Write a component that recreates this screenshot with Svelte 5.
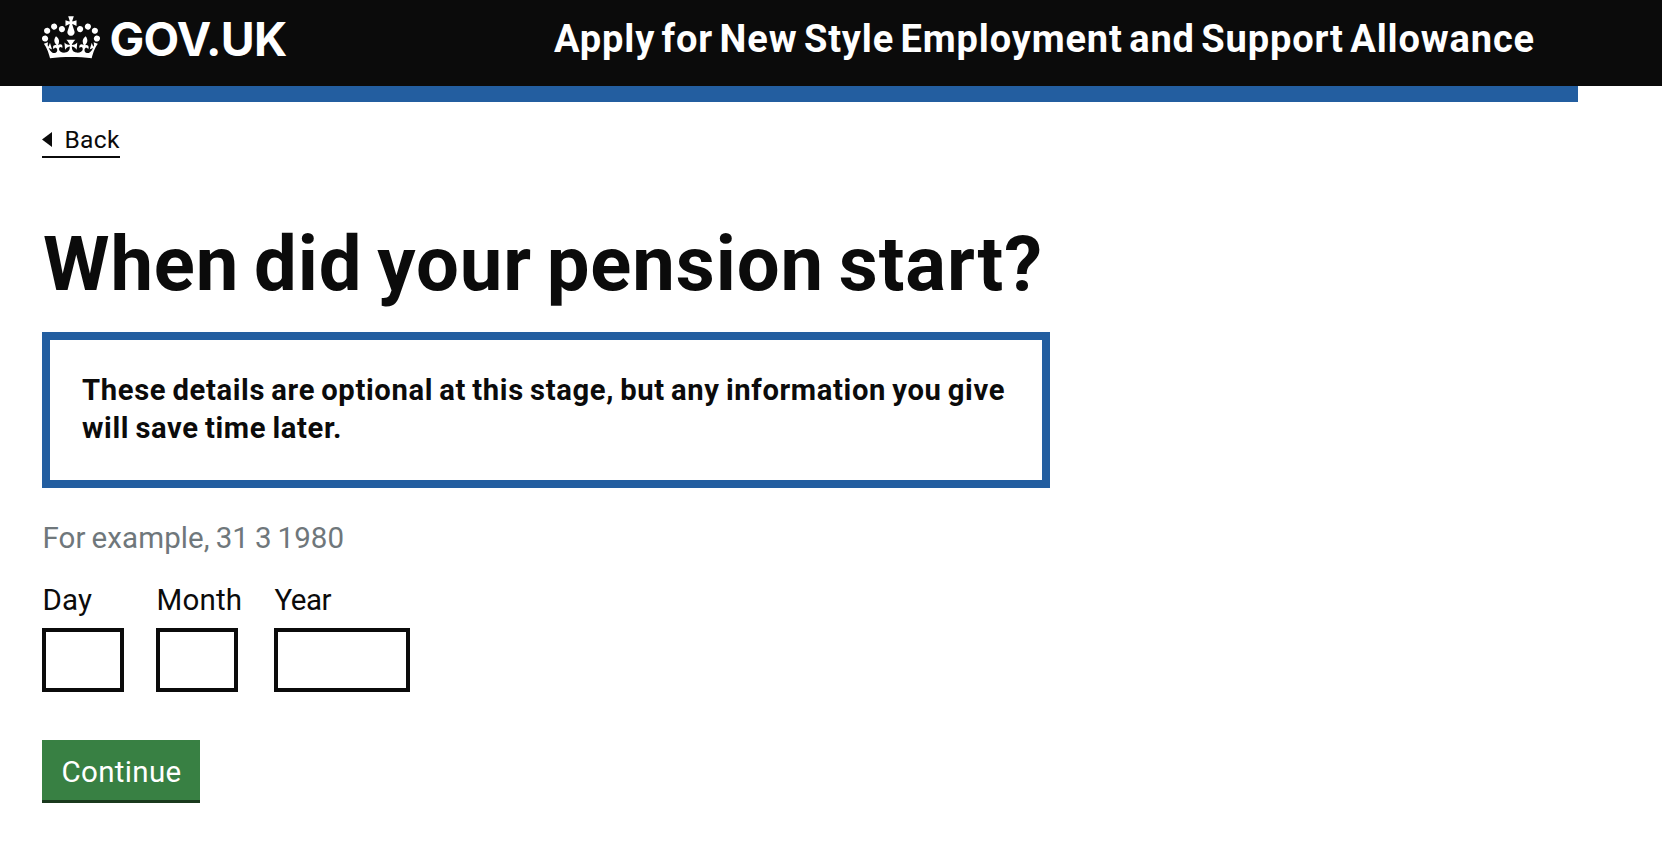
<script>
  const fields = [
    { id: 'day', label: 'Day' },
    { id: 'month', label: 'Month' },
    { id: 'year', label: 'Year' }
  ];
</script>

<header class="header">
  <a class="logo" href="#home">
    <svg class="crown" viewBox="0 0 132 97" width="58" height="43" aria-hidden="true">
      <path fill="currentColor" fill-rule="evenodd" d="M25 30.2c3.5 1.5 7.7-.2 9.1-3.7 1.5-3.6-.2-7.8-3.9-9.2-3.6-1.4-7.6.3-9.1 3.9-1.4 3.5.3 7.5 3.9 9zM9 39.5c3.6 1.5 7.8-.2 9.2-3.7 1.5-3.6-.2-7.8-3.9-9.1-3.6-1.5-7.6.2-9.1 3.8-1.4 3.5.3 7.5 3.8 9zM4.4 57.2c3.5 1.5 7.7-.2 9.1-3.8 1.5-3.6-.2-7.7-3.9-9.1-3.5-1.5-7.6.3-9.1 3.8-1.4 3.5.3 7.6 3.9 9.1zm38.3-21.4c3.5 1.5 7.7-.2 9.1-3.8 1.5-3.6-.2-7.7-3.9-9.1-3.6-1.5-7.6.3-9.1 3.8-1.3 3.6.4 7.7 3.9 9.1zm64.4-5.6c-3.6 1.5-7.8-.2-9.1-3.7-1.5-3.6.2-7.8 3.8-9.2 3.6-1.4 7.7.3 9.2 3.9 1.3 3.5-.4 7.5-3.9 9zm15.9 9.3c-3.6 1.5-7.7-.2-9.1-3.7-1.5-3.6.2-7.8 3.7-9.1 3.6-1.5 7.7.2 9.2 3.8 1.5 3.5-.3 7.5-3.8 9zm4.7 17.7c-3.6 1.5-7.8-.2-9.2-3.8-1.5-3.6.2-7.7 3.9-9.1 3.6-1.5 7.7.3 9.2 3.8 1.3 3.5-.4 7.6-3.9 9.1zM89.3 35.8c-3.6 1.5-7.8-.2-9.2-3.8-1.4-3.6.2-7.7 3.9-9.1 3.6-1.5 7.7.3 9.2 3.8 1.4 3.6-.3 7.7-3.9 9.1zM69.7 17.7l8.9 4.7V9.3l-8.9 2.8c-.2-.3-.5-.6-.9-.9L72.4 0H59.6l3.5 11.2c-.3.3-.6.5-.9.9l-8.8-2.8v13.1l8.8-4.7c.3.3.6.7.9.9l-5 15.4v.1c-.2.8-.4 1.6-.4 2.4 0 4.1 3.1 7.5 7 8.1h.2c.3 0 .7.1 1 .1.4 0 .7 0 1-.1h.2c4-.6 7.1-4.1 7.1-8.1 0-.8-.1-1.7-.4-2.4V34l-5.1-15.4c.4-.2.7-.6 1-.9zM66 92.8c16.9 0 32.8 1.1 47.1 3.2 4-16.9 8.9-26.7 14-33.5l-9.6-3.4c1 4.9 1.1 7.2 0 10.2-1.5-1.4-3-4.3-4.2-8.7L108.6 76c2.8-2 5-3.2 7.5-3.3-4.4 9.4-10 11.9-13.6 11.2-4.3-.8-6.3-4.6-5.6-7.9 1-4.7 5.7-5.9 8-.5 4.3-8.7-3-11.4-7.6-8.8 7.1-7.2 7.9-13.5 2.1-21.1-8 6.1-8.1 12.3-4.5 20.8-4.7-5.4-12.1-2.5-9.5 6.2 3.4-5.2 7.9-2 7.2 3.1-.6 4.3-6.4 7.8-13.5 7.2-10.3-.9-10.9-8-11.2-13.8 2.5-.5 7.1 1.8 11 7.3L80.2 60c-4.1 4.4-8 5.3-12.3 5.4 1.4-4.4 8-11.6 8-11.6H55.5s6.4 7.2 7.9 11.6c-4.2-.1-8-1-12.3-5.4l1.4 16.4c3.9-5.5 8.5-7.7 10.9-7.3-.3 5.8-.9 12.8-11.1 13.8-7.2.6-12.9-2.9-13.5-7.2-.7-5 3.8-8.3 7.1-3.1 2.7-8.7-4.6-11.6-9.4-6.2 3.7-8.5 3.6-14.7-4.6-20.8-5.8 7.6-5 13.9 2.2 21.1-4.7-2.6-11.9.1-7.7 8.8 2.3-5.5 7.1-4.2 8.1.5.7 3.3-1.3 7.1-5.7 7.9-3.5.7-9-1.8-13.5-11.2 2.5.1 4.7 1.3 7.5 3.3l-4.7-15.4c-1.2 4.4-2.7 7.2-4.3 8.7-1.1-3-.9-5.3 0-10.2l-9.5 3.4c5 6.9 9.9 16.7 14 33.5 14.8-2.1 30.8-3.2 47.7-3.2z" />
    </svg>
    <span class="logotype">GOV.UK</span>
  </a>
  <a class="service" href="#service">Apply for New Style Employment and Support Allowance</a>
</header>

<div class="container">
  <div class="bar"></div>
  <a class="back" href="#back">
    <svg width="10" height="15" viewBox="0 0 10 15" aria-hidden="true"><path d="M0 7.5 10 0v15z" fill="currentColor" /></svg>
    <span>Back</span>
  </a>

  <main>
    <h1>When did your pension start?</h1>
    <div class="notice">
      These details are optional at this stage, but any information you give<br />will save time later.
    </div>
    <form>
      <p class="hint">For example, 31 3 1980</p>
      <div class="date">
        {#each fields as field}
          <div class="field">
            <label class={field.id} for={field.id}>{field.label}</label>
            <input id={field.id} class={field.id} type="text" inputmode="numeric" />
          </div>
        {/each}
      </div>
      <button type="button">Continue</button>
    </form>
  </main>
</div>

<style>
  :global(body) {
    margin: 0;
    background: #fff;
    color: #0b0b0b;
    font-family: Roboto, 'Liberation Sans', sans-serif;
  }
  .header {
    display: flex;
    align-items: flex-start;
    box-sizing: border-box;
    height: 86px;
    padding: 14px 42px 0;
    background: #0b0b0b;
    color: #fff;
  }
  a {
    color: inherit;
    text-decoration: none;
  }
  .logo {
    display: flex;
    width: 512px;
    flex: none;
  }
  .crown {
    margin-top: 2px;
  }
  .logotype {
    margin-left: 9.5px;
    font: 700 46.3px/50px Inter, 'Liberation Sans', sans-serif;
    letter-spacing: -0.7px;
  }
  .service {
    font-size: 38px;
    line-height: 50px;
    font-weight: 700;
    letter-spacing: 0.85px;
    word-spacing: -3.8px;
    white-space: nowrap;
  }
  .container {
    width: 1536px;
    margin-left: 42px;
  }
  .bar {
    height: 16px;
    background: #235ea0;
  }
  .back {
    display: flex;
    align-items: center;
    box-sizing: border-box;
    width: 78px;
    height: 33px;
    margin-top: 23px;
    padding-bottom: 2px;
    border-bottom: 2px solid #0b0b0b;
  }
  .back svg {
    flex: none;
  }
  .back span {
    margin-left: 12.5px;
    font-size: 24.6px;
    line-height: 28px;
    letter-spacing: 0.3px;
    white-space: nowrap;
  }
  h1 {
    margin: 64px 0 26px;
    padding-left: 1px;
    font-size: 76px;
    line-height: 84px;
    font-weight: 700;
    letter-spacing: 0.9px;
    word-spacing: -5px;
  }
  .notice {
    box-sizing: border-box;
    width: 1008px;
    height: 156px;
    padding: 31px 20px 0 32px;
    border: 8px solid #235ea0;
    font-size: 29.2px;
    line-height: 38px;
    font-weight: 700;
    letter-spacing: 0.65px;
    word-spacing: -1.7px;
    white-space: nowrap;
  }
  .hint {
    margin: 31px 0 24px;
    padding-left: 0.5px;
    color: #6f777b;
    font-size: 29.5px;
    line-height: 38px;
    letter-spacing: 0.1px;
    word-spacing: -1.5px;
  }
  .date {
    display: grid;
    grid-template-columns: 82px 86px 136px;
    column-gap: 32px;
  }
  .field {
    display: flex;
    flex-direction: column;
    gap: 9px;
  }
  label {
    padding-left: 0.5px;
    font-size: 29.5px;
    line-height: 38px;
    letter-spacing: 0.2px;
  }
  label.year {
    letter-spacing: -0.5px;
  }
  input {
    box-sizing: border-box;
    width: 82px;
    height: 64px;
    margin: 0;
    padding: 8px;
    border: 4px solid #0b0b0b;
    border-radius: 0;
    background: #fff;
    font: inherit;
    font-size: 29.5px;
  }
  input.year {
    width: 136px;
  }
  button {
    display: block;
    box-sizing: border-box;
    width: 158px;
    height: 63px;
    margin: 48px 0 0;
    padding: 4px 0 0 1px;
    border: 0;
    border-bottom: 3px solid #19391d;
    background: #388043;
    color: #fff;
    font-family: inherit;
    font-size: 29.5px;
    line-height: 56px;
    letter-spacing: 0.35px;
  }
</style>
